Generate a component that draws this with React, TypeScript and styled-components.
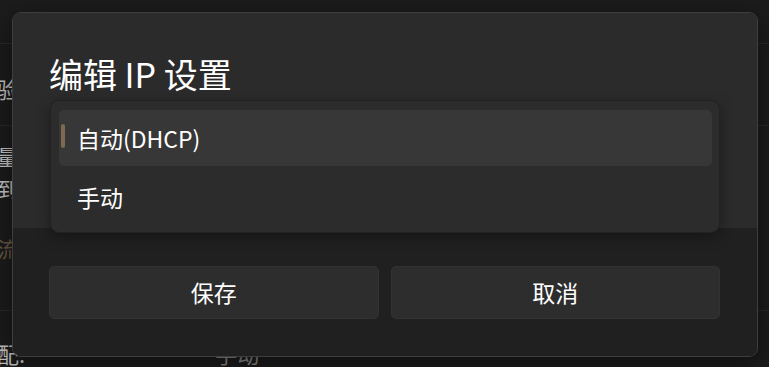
import styled, { createGlobalStyle } from "styled-components";

const GlobalStyle = createGlobalStyle`
    html, body {
        margin: 0;
        padding: 0;
        background: #1c1c1c;
        font-family: "Noto Sans CJK SC", "Noto Sans", sans-serif;
        overflow: hidden;
    }
    #root {
        width: 769px;
        height: 367px;
        position: relative;
    }
`;

const Page = styled.div`
    display: flex;
    flex-direction: column;
    width: 769px;
    height: 367px;
    overflow: hidden;
    background: #1c1c1c;
`;

const BgRow = styled.div<{ $h: number }>`
    height: ${(p) => p.$h}px;
    flex-shrink: 0;
    border-bottom: 1px solid #2a2a2a;
    display: flex;
    flex-direction: column;
    box-sizing: border-box;
`;

const BgLine = styled.div<{ $top: number; $color?: string; $size?: number }>`
    margin-top: ${(p) => p.$top}px;
    margin-left: -3px;
    display: flex;
    gap: 190px;
    font-size: ${(p) => p.$size ?? 21}px;
    line-height: 28px;
    color: ${(p) => p.$color ?? "#c8c8c8"};
    white-space: nowrap;
`;

const BgValue = styled.span`
    color: #8c8c8c;
`;

const Overlay = styled.div`
    position: absolute;
    inset: 0;
    padding: 12px 11px 12px 12px;
    box-sizing: border-box;
`;

const Dialog = styled.div`
    position: relative;
    height: 343px;
    border: 1px solid #3e3e3e;
    border-radius: 9px;
    overflow: hidden;
    display: flex;
    flex-direction: column;
    box-shadow: 0 8px 30px rgba(0, 0, 0, 0.5);
`;

const Body = styled.div`
    height: 215px;
    flex-shrink: 0;
    background: #2b2b2b;
    padding: 40px 36px 0 36px;
    box-sizing: border-box;
`;

const Title = styled.h1`
    margin: 0;
    font-size: 34px;
    line-height: 42px;
    font-weight: 400;
    color: #ffffff;
`;

const Footer = styled.div`
    flex: 1;
    background: #202020;
    display: grid;
    grid-template-columns: 1fr 1fr;
    gap: 12px;
    padding: 38px 37px 0 36px;
    align-items: start;
`;

const Button = styled.button`
    height: 53px;
    background: #2d2d2d;
    border: 1px solid #323232;
    border-radius: 5px;
    color: #ffffff;
    font-family: inherit;
    font-size: 23px;
    font-weight: 400;
    padding: 0;
    padding-bottom: 1px;
`;

const Menu = styled.div`
    position: absolute;
    left: 37px;
    top: 87px;
    width: 670px;
    padding: 6px 7px 4px 8px;
    box-sizing: border-box;
    background: #2c2c2c;
    border: 1px solid #222222;
    border-radius: 9px;
    box-shadow: 0 4px 14px rgba(0, 0, 0, 0.35);
`;

const Item = styled.div<{ $selected?: boolean }>`
    position: relative;
    height: 56px;
    margin: 3px 0;
    border-radius: 5px;
    display: flex;
    align-items: center;
    padding-left: 18px;
    padding-bottom: 1px;
    box-sizing: border-box;
    background: ${(p) => (p.$selected ? "#373737" : "transparent")};
    color: #ffffff;
    font-size: 23px;
`;

const Indicator = styled.span`
    position: absolute;
    left: 2px;
    top: 14px;
    width: 4px;
    height: 24px;
    border-radius: 2px;
    background: #7d6a50;
`;

export default function App() {
    return (
        <>
            <GlobalStyle />
            <Page>
                <BgRow $h={44} />
                <BgRow $h={82}>
                    <BgLine $top={30} $size={22}>验证</BgLine>
                </BgRow>
                <BgRow $h={185}>
                    <BgLine $top={16}>量计</BgLine>
                    <BgLine $top={4}>到达</BgLine>
                    <BgLine $top={32} $color="#6b5a45">流量</BgLine>
                </BgRow>
                <BgRow $h={60}>
                    <BgLine $top={28} $size={22}>
                        配.<BgValue>手动</BgValue>
                    </BgLine>
                </BgRow>
            </Page>
            <Overlay>
                <Dialog>
                    <Body>
                        <Title>编辑 IP 设置</Title>
                    </Body>
                    <Footer>
                        <Button>保存</Button>
                        <Button>取消</Button>
                    </Footer>
                    <Menu>
                        <Item $selected>
                            <Indicator />
                            自动(DHCP)
                        </Item>
                        <Item>手动</Item>
                    </Menu>
                </Dialog>
            </Overlay>
        </>
    );
}
